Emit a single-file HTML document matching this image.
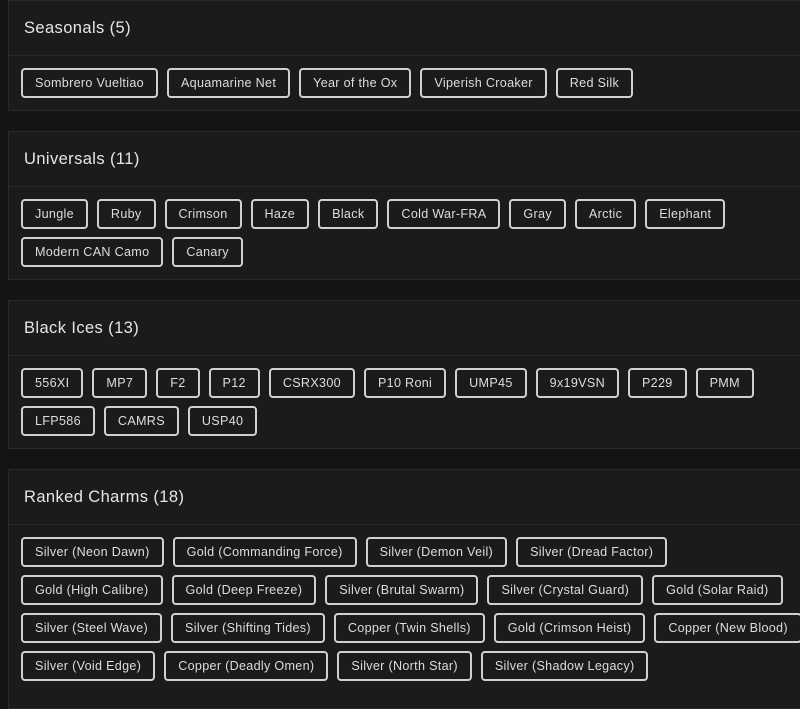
<!DOCTYPE html>
<html><head><style>
body{margin:0;background:#141414;font-family:"Liberation Sans",sans-serif;width:800px;height:694px;overflow:hidden}
.card{position:absolute;left:8px;width:800px;background:#1b1b1b;border:1px solid #2a2a2a;box-sizing:border-box}
.h{height:55px;border-bottom:1px solid #2a2a2a;box-sizing:border-box;color:#e6e6e6;font-size:16.5px;letter-spacing:0.4px;line-height:54px;padding-left:15px}
.b{padding:12px 0 5px 12px}
.r{display:flex;white-space:nowrap}
.t{height:30px;box-sizing:border-box;border:2px solid #d0d0d0;border-radius:4px;color:#ddd;font-size:12.6px;letter-spacing:0.3px;line-height:26px;padding:0 12px;margin:0 9px 8px 0;white-space:nowrap}
</style></head><body>
<div class="card" style="top:0;height:111px"><div class="h">Seasonals (5)</div><div class="b"><div class="r">
<span class="t">Sombrero Vueltiao</span><span class="t">Aquamarine Net</span><span class="t">Year of the Ox</span><span class="t">Viperish Croaker</span><span class="t">Red Silk</span></div></div></div>
<div class="card" style="top:131px;height:149px"><div class="h">Universals (11)</div><div class="b"><div class="r">
<span class="t">Jungle</span><span class="t">Ruby</span><span class="t">Crimson</span><span class="t">Haze</span><span class="t">Black</span><span class="t">Cold War-FRA</span><span class="t">Gray</span><span class="t">Arctic</span><span class="t">Elephant</span></div><div class="r"><span class="t">Modern CAN Camo</span><span class="t">Canary</span></div></div></div>
<div class="card" style="top:300px;height:149px"><div class="h">Black Ices (13)</div><div class="b"><div class="r">
<span class="t">556XI</span><span class="t">MP7</span><span class="t">F2</span><span class="t">P12</span><span class="t">CSRX300</span><span class="t">P10 Roni</span><span class="t">UMP45</span><span class="t">9x19VSN</span><span class="t">P229</span><span class="t">PMM</span></div><div class="r"><span class="t">LFP586</span><span class="t">CAMRS</span><span class="t">USP40</span></div></div></div>
<div class="card" style="top:469px;height:240px"><div class="h">Ranked Charms (18)</div><div class="b"><div class="r">
<span class="t">Silver (Neon Dawn)</span><span class="t">Gold (Commanding Force)</span><span class="t">Silver (Demon Veil)</span><span class="t">Silver (Dread Factor)</span></div><div class="r"><span class="t">Gold (High Calibre)</span><span class="t">Gold (Deep Freeze)</span><span class="t">Silver (Brutal Swarm)</span><span class="t">Silver (Crystal Guard)</span><span class="t">Gold (Solar Raid)</span></div><div class="r"><span class="t">Silver (Steel Wave)</span><span class="t">Silver (Shifting Tides)</span><span class="t">Copper (Twin Shells)</span><span class="t">Gold (Crimson Heist)</span><span class="t">Copper (New Blood)</span></div><div class="r"><span class="t">Silver (Void Edge)</span><span class="t">Copper (Deadly Omen)</span><span class="t">Silver (North Star)</span><span class="t">Silver (Shadow Legacy)</span></div></div></div>
</body></html>
